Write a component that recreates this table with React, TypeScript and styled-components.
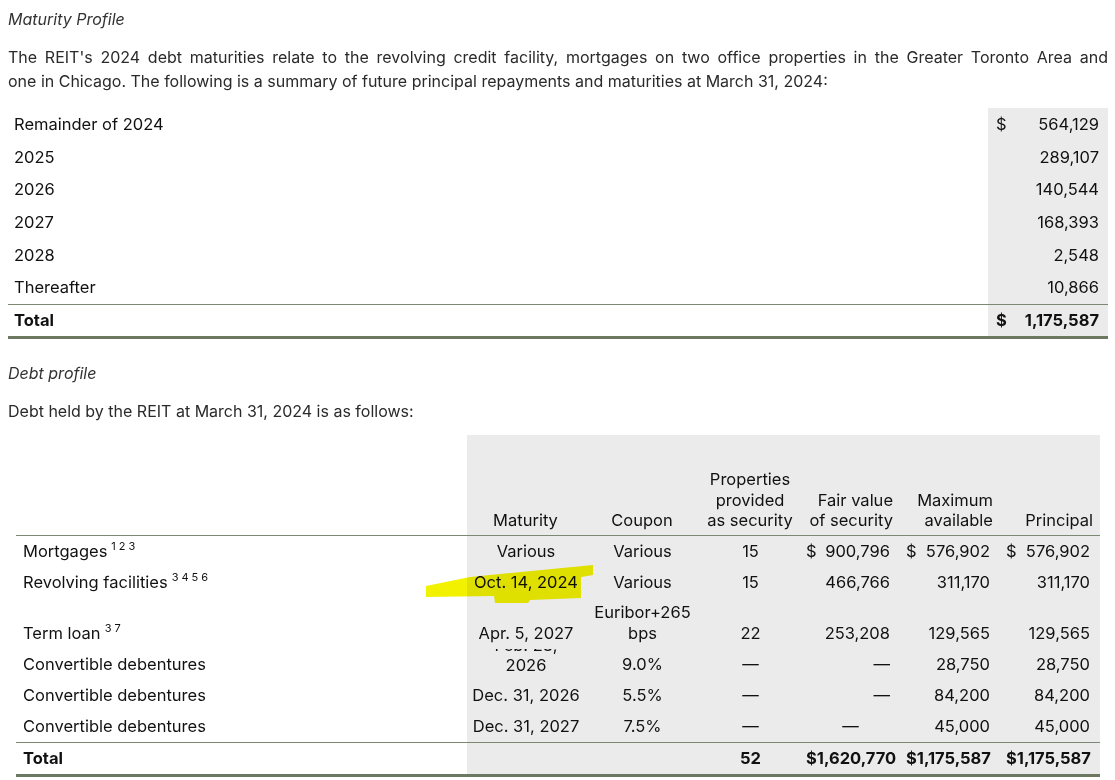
import React from 'react';
import styled, { createGlobalStyle } from 'styled-components';

const Global = createGlobalStyle`
  html, body { margin: 0; padding: 0; background: #ffffff; }
  body { font-family: Inter, Roboto, "Liberation Sans", Arial, sans-serif; color: #222; }
`;

const Page = styled.div`
  position: relative;
  width: 1115px;
  box-sizing: border-box;
  padding: 7px 7px 0 8px;
`;

const Heading = styled.div<{ $mt?: number }>`
  font-style: italic;
  font-size: 16px;
  line-height: 24px;
  color: #333;
  margin-top: ${(p) => p.$mt ?? 0}px;
`;

const Para = styled.p<{ $mt?: number }>`
  margin: ${(p) => p.$mt ?? 14}px 0 0;
  font-size: 16px;
  line-height: 24px;
  text-align: justify;
  color: #2a2a2a;
`;

const JustifiedLine = styled.span`
  display: block;
  text-align: justify;
  text-align-last: justify;
`;

const LINE = '#7b8872';
const THICK = '#6c785f';
const GRAY = '#ebebeb';

const SummaryTable = styled.table`
  width: 1100px;
  border-collapse: collapse;
  margin-top: 15px;
  font-size: 16.5px;
  color: #111;
`;

const SRow = styled.tr<{ $total?: boolean }>`
  td {
    height: 32.6px;
    padding: 0;
    ${(p) =>
      p.$total
        ? `border-top: 1px solid ${LINE}; border-bottom: 3px solid ${THICK}; font-weight: 700; height: 31px;`
        : ''}
  }
`;

const SLabel = styled.td`
  padding-left: 6px !important;
`;

const SDollar = styled.td`
  width: 13px;
  background: ${GRAY};
  padding-left: 8px !important;
`;

const SNum = styled.td`
  width: 90px;
  background: ${GRAY};
  text-align: right;
  padding-right: 9px !important;
`;

const DebtTable = styled.table`
  margin-left: 8px;
  margin-top: 12px;
  width: 1084px;
  border-collapse: collapse;
  table-layout: fixed;
  font-size: 16.5px;
  color: #111;
`;

const HeadCell = styled.th<{ $align?: 'left' | 'center' | 'right'; $gray?: boolean }>`
  height: 96px;
  padding: 0 ${(p) => (p.$align === 'right' ? 7 : 0)}px 4px 0;
  vertical-align: bottom;
  font-weight: 400;
  line-height: 20.5px;
  text-align: ${(p) => p.$align ?? 'center'};
  background: ${(p) => (p.$gray ? GRAY : 'transparent')};
  border-bottom: 1px solid ${LINE};
`;

const DRow = styled.tr<{ $tall?: boolean; $total?: boolean }>`
  td {
    height: ${(p) => (p.$tall ? 46 : 31)}px;
    vertical-align: ${(p) => (p.$tall ? 'bottom' : 'middle')};
    padding-top: 0;
    padding-bottom: ${(p) => (p.$tall ? 5 : 0)}px;
    line-height: 21px;
    ${(p) =>
      p.$total
        ? `border-top: 1px solid ${LINE}; border-bottom: 3px solid ${THICK}; font-weight: 700;`
        : ''}
  }
`;

const Label = styled.td`
  padding-left: 7px;
  white-space: nowrap;
`;

const Cell = styled.td<{ $align?: 'left' | 'center' | 'right' }>`
  background: ${GRAY};
  text-align: ${(p) => p.$align ?? 'center'};
  padding-right: ${(p) => (p.$align === 'right' ? 10 : 0)}px;
  white-space: nowrap;
`;

const Sup = styled.sup`
  font-size: 11px;
  letter-spacing: 3px;
  margin-left: 4px;
  vertical-align: 7px;
  line-height: 0;
`;

const Money = styled.span`
  display: flex;
  justify-content: space-between;
  padding-left: 5px;
`;

const Clipped = styled.div`
  height: 31px;
  overflow: hidden;
  display: flex;
  flex-direction: column;
  justify-content: flex-end;
  padding-bottom: 5px;
  box-sizing: border-box;
  line-height: 20px;
`;

const Highlight = styled.svg`
  position: absolute;
  left: 0;
  top: 0;
  width: 1115px;
  height: 780px;
  pointer-events: none;
  mix-blend-mode: multiply;
`;

const summary = [
  ['Remainder of 2024', '$', '564,129'],
  ['2025', '', '289,107'],
  ['2026', '', '140,544'],
  ['2027', '', '168,393'],
  ['2028', '', '2,548'],
  ['Thereafter', '', '10,866'],
];

function Dollar({ v }: { v: string }) {
  return (
    <Money>
      <span>$</span>
      <span>{v}</span>
    </Money>
  );
}

export default function App() {
  return (
    <Page>
      <Global />
      <Heading>Maturity Profile</Heading>
      <Para>
        <JustifiedLine>
          The REIT's 2024 debt maturities relate to the revolving credit facility, mortgages on two office
          properties in the Greater Toronto Area and
        </JustifiedLine>
        one in Chicago. The following is a summary of future principal repayments and maturities at March 31,
        2024:
      </Para>

      <SummaryTable>
        <tbody>
          {summary.map(([l, d, n]) => (
            <SRow key={l}>
              <SLabel>{l}</SLabel>
              <SDollar>{d}</SDollar>
              <SNum>{n}</SNum>
            </SRow>
          ))}
          <SRow $total>
            <SLabel>Total</SLabel>
            <SDollar>$</SDollar>
            <SNum>1,175,587</SNum>
          </SRow>
        </tbody>
      </SummaryTable>

      <Heading $mt={22}>Debt profile</Heading>
      <Para $mt={14}>Debt held by the REIT at March 31, 2024 is as follows:</Para>

      <DebtTable>
        <colgroup>
          <col style={{ width: 451 }} />
          <col style={{ width: 117 }} />
          <col style={{ width: 116 }} />
          <col style={{ width: 100 }} />
          <col style={{ width: 100 }} />
          <col style={{ width: 100 }} />
          <col style={{ width: 100 }} />
        </colgroup>
        <thead>
          <tr>
            <HeadCell $align="left"></HeadCell>
            <HeadCell $gray>Maturity</HeadCell>
            <HeadCell $gray>Coupon</HeadCell>
            <HeadCell $gray>
              Properties
              <br />
              provided
              <br />
              as security
            </HeadCell>
            <HeadCell $gray $align="right">
              Fair value
              <br />
              of security
            </HeadCell>
            <HeadCell $gray $align="right">
              Maximum
              <br />
              available
            </HeadCell>
            <HeadCell $gray $align="right">Principal</HeadCell>
          </tr>
        </thead>
        <tbody>
          <DRow>
            <Label>
              Mortgages<Sup>123</Sup>
            </Label>
            <Cell>Various</Cell>
            <Cell>Various</Cell>
            <Cell>15</Cell>
            <Cell $align="right">
              <Dollar v="900,796" />
            </Cell>
            <Cell $align="right">
              <Dollar v="576,902" />
            </Cell>
            <Cell $align="right">
              <Dollar v="576,902" />
            </Cell>
          </DRow>
          <DRow>
            <Label>
              Revolving facilities<Sup>3456</Sup>
            </Label>
            <Cell>Oct. 14, 2024</Cell>
            <Cell>Various</Cell>
            <Cell>15</Cell>
            <Cell $align="right">466,766</Cell>
            <Cell $align="right">311,170</Cell>
            <Cell $align="right">311,170</Cell>
          </DRow>
          <DRow $tall>
            <Label>
              Term loan<Sup>37</Sup>
            </Label>
            <Cell>Apr. 5, 2027</Cell>
            <Cell>
              Euribor+265
              <br />
              bps
            </Cell>
            <Cell>22</Cell>
            <Cell $align="right">253,208</Cell>
            <Cell $align="right">129,565</Cell>
            <Cell $align="right">129,565</Cell>
          </DRow>
          <DRow>
            <Label>Convertible debentures</Label>
            <Cell>
              <Clipped>
                <span>Feb. 28,</span>
                <span>2026</span>
              </Clipped>
            </Cell>
            <Cell>9.0%</Cell>
            <Cell>—</Cell>
            <Cell $align="right">—</Cell>
            <Cell $align="right">28,750</Cell>
            <Cell $align="right">28,750</Cell>
          </DRow>
          <DRow>
            <Label>Convertible debentures</Label>
            <Cell>Dec. 31, 2026</Cell>
            <Cell>5.5%</Cell>
            <Cell>—</Cell>
            <Cell $align="right">—</Cell>
            <Cell $align="right">84,200</Cell>
            <Cell $align="right">84,200</Cell>
          </DRow>
          <DRow>
            <Label>Convertible debentures</Label>
            <Cell>Dec. 31, 2027</Cell>
            <Cell>7.5%</Cell>
            <Cell>—</Cell>
            <Cell>—</Cell>
            <Cell $align="right">45,000</Cell>
            <Cell $align="right">45,000</Cell>
          </DRow>
          <DRow $total>
            <Label>Total</Label>
            <Cell></Cell>
            <Cell></Cell>
            <Cell>52</Cell>
            <Cell $align="right">
              <Money>
                <span>$1,620,770</span>
              </Money>
            </Cell>
            <Cell $align="right">
              <Dollar v="1,175,587" />
            </Cell>
            <Cell $align="right">
              <Dollar v="1,175,587" />
            </Cell>
          </DRow>
        </tbody>
      </DebtTable>

      <Highlight viewBox="0 0 1115 780">
        <polygon
          fill="#f2f200"
          points="426,586 470,577 593,565 593,575 581,577 581,598 530,600 528,603 495,603 494,596 426,597"
        />
      </Highlight>
    </Page>
  );
}
